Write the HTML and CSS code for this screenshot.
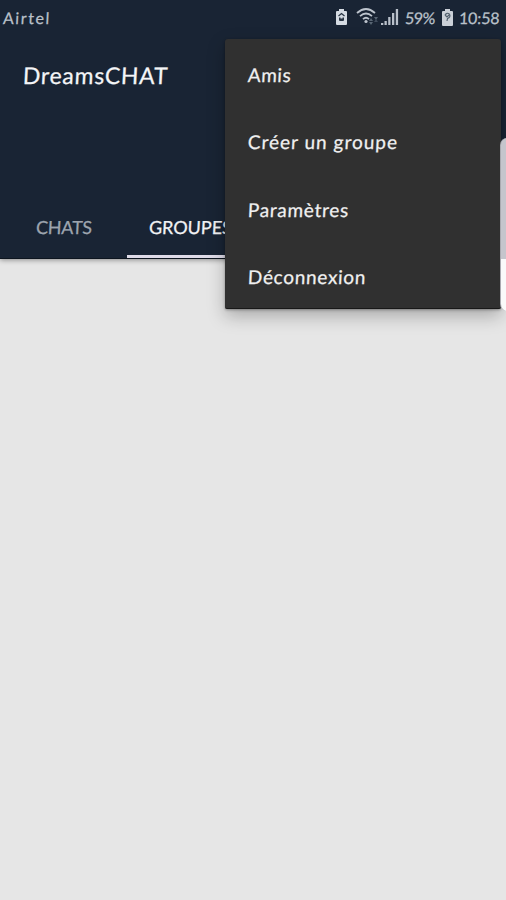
FILE: index.html
```html
<!DOCTYPE html>
<html lang="fr">
<head>
<meta charset="utf-8">
<title>DreamsCHAT</title>
<link rel="stylesheet" href="styles.css">
</head>
<body>
<div class="screen">
  <header class="appbar">
    <div class="status">
      <span class="carrier"><span class="ink">Airtel</span></span>
      <div class="indicators">
        <svg class="saver" width="13" height="18" viewBox="0 0 13 18"><path d="M4 1h5v2h2q1 0 1 1v12q0 1-1 1H2q-1 0-1-1V4q0-1 1-1h2z" fill="#d5dbe2"/><path d="m3.5 8 3-2.5 3 2.5" fill="none" stroke="#293543" stroke-width="1.3"/><path d="M4 9.5h1.5v1h2v-1H9V12q0 1-1 1H5q-1 0-1-1z" fill="#293543"/></svg>
        <svg class="wifi" width="23" height="20" viewBox="0 0 23 20"><g fill="none" stroke="#bdc4cd" stroke-width="1.8"><path d="M1 6Q10-2 19 6"/><path d="M4 9.2Q10 3.8 16 9.2"/><path d="M7 12.2Q10 9.4 13 12.2"/></g><circle cx="10" cy="14.5" r="1.6" fill="#bdc4cd"/><path d="m13 14 2-3 2 3zm0 1h4l-2 3zm5-5h4l-2 3z" fill="#596674"/><path d="m18 15 2-3 2 3z" fill="#3f4b5b"/></svg>
        <svg class="signal" width="18" height="18" viewBox="0 0 18 18"><path d="M0 17v-2h2.3v2zm3.5 0v-4h2.3v4zm3.7 0V9h2.3v8zm3.8 0V5h2.3v12zm3.8 0V1h2.3v16z" fill="#b9c0ca"/></svg>
        <span class="percent"><span class="ink">59%</span></span>
        <svg class="battery" width="13" height="19" viewBox="0 0 13 19"><path d="M4 1h5v2h2q1 0 1 1v13q0 1-1 1H2q-1 0-1-1V4q0-1 1-1h2z" fill="#cbd0d7"/><path d="M4 7q2-3 4.5-.8Q10 9 6.5 10.5L6 13M4 7l2 2 2-2" fill="none" stroke="#52606d" stroke-width="1.2"/></svg>
        <time class="clock"><span class="ink">10:58</span></time>
      </div>
    </div>
    <h1 class="title"><span class="ink">DreamsCHAT</span></h1>
    <nav class="tabs">
      <a class="tab chats"><span class="ink">CHATS</span></a>
      <a class="tab groups"><span class="ink">GROUPES</span></a>
    </nav>
  </header>
  <main class="content"></main>
  <div class="edge-panel"></div>
  <ul class="menu">
    <li><span class="ink friends">Amis</span></li>
    <li><span class="ink create">Créer un groupe</span></li>
    <li><span class="ink settings">Paramètres</span></li>
    <li><span class="ink logout">Déconnexion</span></li>
  </ul>
</div>
</body>
</html>
```
FILE: styles.css
```css
* { box-sizing: border-box; }
body { margin: 0; font-family: Lato, sans-serif; }
.screen { position: relative; width: 506px; height: 900px; overflow: hidden; display: flex; flex-direction: column; background: #e6e6e6; }
.appbar { height: 259px; flex: none; display: flex; flex-direction: column; background: #192434; border-bottom: 1px solid #0d151f; box-shadow: 0 1px 5px #0006; }
.ink { display: inline-block; white-space: nowrap; transform: skewX(-3deg); -webkit-text-stroke: .25px currentColor; }
.status { height: 38px; display: flex; justify-content: space-between; align-items: center; padding: 0 7px 4px 3px; color: #bac1ca; font-size: 16px; font-weight: 400; }
.carrier { letter-spacing: 1.6px; }
.indicators { display: flex; align-items: center; height: 34px; }
.wifi { margin-left: 8px; }
.signal { margin-left: 2px; }
.percent { width: 32px; margin-left: 6px; letter-spacing: -.5px; }
.battery { margin-left: 4px; }
.clock { width: 40px; margin-left: 5px; letter-spacing: -.1px; }
.title { margin: 22px 0 0 23px; height: 30px; line-height: 30px; color: #f4f5f7; font-size: 23px; font-weight: 400; letter-spacing: .75px; }
.tabs { margin-top: auto; height: 62px; display: flex; font-size: 18px; font-weight: 400; }
.tab { width: 127px; text-align: center; line-height: 62px; color: #9da4ae; }
.chats { letter-spacing: -.2px; padding-left: 1px; }
.groups { color: #f1f2f4; border-bottom: 3px solid #dedbe8; }
.content { flex: 1; }
.menu { position: absolute; left: 225px; top: 39px; width: 276px; height: 270px; margin: 0; padding: 2px 0 0 23px; list-style: none; background: #303030; border-bottom: 1px solid #181818; border-radius: 3px 3px 2px 2px; box-shadow: 0 7px 18px #0004, 0 1px 3px #0005; color: #f0f0f0; font-size: 19px; font-weight: 400; }
.menu li { height: 67.4px; line-height: 67.4px; }
.friends { letter-spacing: .5px; }
.create { letter-spacing: 1px; }
.settings { letter-spacing: .7px; }
.logout { letter-spacing: .7px; }
.edge-panel { position: absolute; left: 500px; top: 138px; width: 16px; height: 173px; border-radius: 7px; background: linear-gradient(#c5c5cc 0 121px, #fafafa 121px); z-index: 1; border-left: 1px solid #aaaab0; }
```
